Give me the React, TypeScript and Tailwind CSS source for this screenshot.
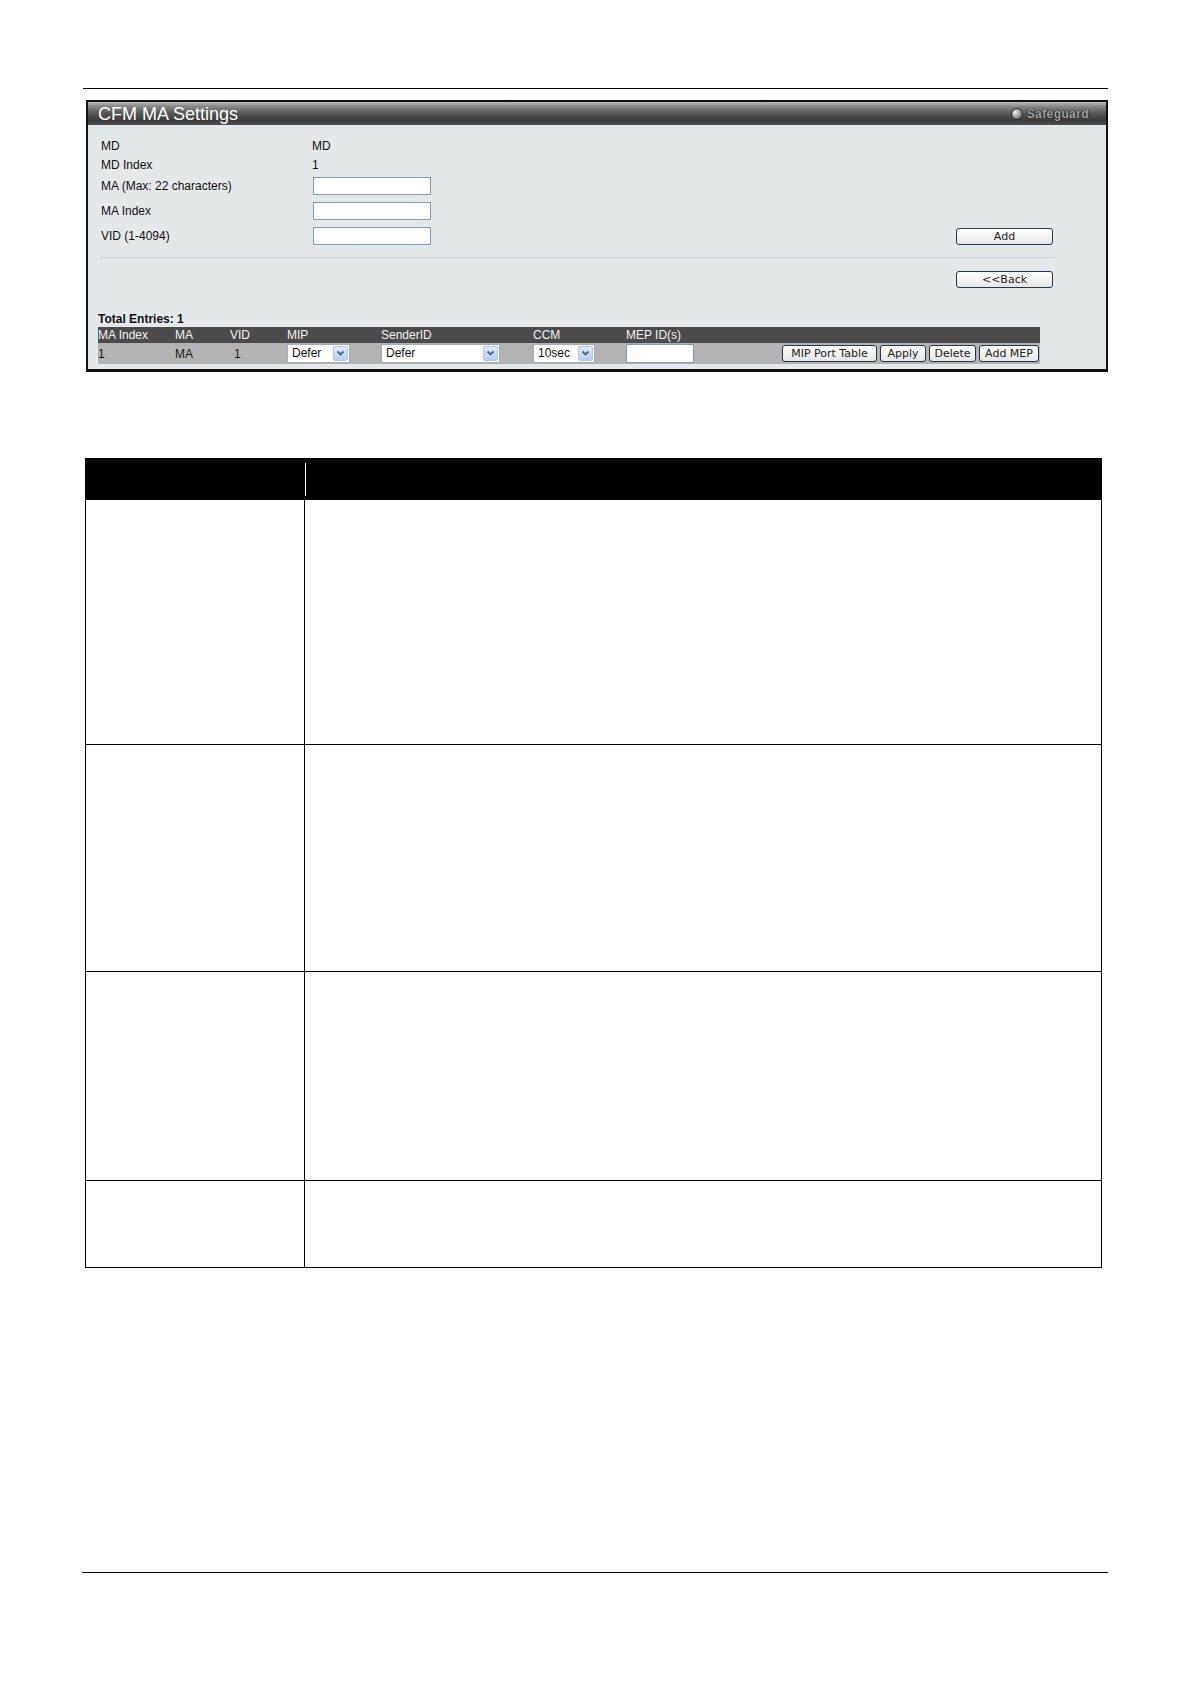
import React from "react";

const arial = "font-['Liberation_Sans',Arial,sans-serif]";
const verdana = "font-['DejaVu_Sans',Verdana,sans-serif]";

function Btn({ w, children }: { w: string; children: React.ReactNode }) {
  return (
    <button
      type="button"
      className={`${w} h-[17px] shrink-0 rounded-[3px] border border-[#27384a] bg-[linear-gradient(to_bottom,#ffffff,#e6e6e6)] ${verdana} text-[11px] leading-none text-[#222]`}
    >
      {children}
    </button>
  );
}

function Select({ w, value }: { w: string; value: string }) {
  return (
    <div className={`${w} flex h-[19px] items-stretch border border-[#a5acb5] bg-white`}>
      <span className={`flex-1 pl-[4px] ${arial} text-[12px] leading-[17px] text-[#111]`}>{value}</span>
      <span className="m-[1px] flex w-[15px] items-center justify-center rounded-[2px] border border-[#b3c6e6] bg-[linear-gradient(to_bottom,#e1eafb,#b9cdf2)]">
        <svg width="9" height="7" viewBox="0 0 9 7">
          <polyline points="1.5,1.5 4.5,4.5 7.5,1.5" fill="none" stroke="#4d6185" strokeWidth="1.8" />
        </svg>
      </span>
    </div>
  );
}

function TextBox({ w }: { w: string }) {
  return <div className={`${w} h-[18px] border border-[#7f9db9] bg-white`} />;
}

export default function App() {
  return (
    <div className="flex min-h-[1684px] w-[1191px] flex-col bg-white pt-[88px]">
      <div className="ml-[83px] h-px w-[1025px] bg-black" />

      {/* settings panel */}
      <div className="ml-[86px] mt-[11px] flex h-[272px] w-[1022px] flex-col border-2 border-b-[3px] border-[#111] bg-[#e5e8e9]">
        <div className="flex h-[23px] items-center justify-between bg-[linear-gradient(to_bottom,#bdbdbd_0%,#8a8a8a_18%,#555_50%,#3c3c3c_80%,#4f4f4f_100%)] pl-[10px] pr-[17px]">
          <span className={`${arial} text-[18px] leading-none text-white`}>CFM MA Settings</span>
          <span className="flex items-center gap-[4px]">
            <span className="h-[12px] w-[12px] rounded-full border border-[#2a2a2a] bg-[radial-gradient(circle_at_35%_35%,#f0f0f0,#999_50%,#4a4a4a)]" />
            <span
              className={`${arial} text-[12px] font-bold leading-none tracking-[0.4px] text-[#a4a4a4] [text-shadow:0_0_1px_#000,0_0_1px_#000]`}
            >
              Safeguard
            </span>
          </span>
        </div>

        <div className={`flex flex-1 flex-col pt-[11px] ${arial} text-[12px] text-[#111]`}>
          <div className="flex h-[19px] items-center pl-[13px]">
            <span className="w-[211px]">MD</span>
            <span>MD</span>
          </div>
          <div className="flex h-[19px] items-center pl-[13px]">
            <span className="w-[211px]">MD Index</span>
            <span>1</span>
          </div>
          <div className="mt-[3px] flex h-[18px] items-center pl-[13px]">
            <span className="w-[212px]">MA (Max: 22 characters)</span>
            <TextBox w="w-[118px]" />
          </div>
          <div className="mt-[7px] flex h-[18px] items-center pl-[13px]">
            <span className="w-[212px]">MA Index</span>
            <TextBox w="w-[118px]" />
          </div>
          <div className="mt-[7px] flex h-[18px] items-center pl-[13px] pr-[53px]">
            <span className="w-[212px]">VID (1-4094)</span>
            <TextBox w="w-[118px]" />
            <div className="ml-auto">
              <Btn w="w-[97px] h-[15px]">Add</Btn>
            </div>
          </div>
          <div className="ml-[12px] mt-[12px] h-px w-[955px] bg-[#c9cdd0]" />
          <div className="mt-[12px] flex pr-[53px]">
            <div className="ml-auto">
              <Btn w="w-[97px]">&lt;&lt;Back</Btn>
            </div>
          </div>

          <div className="ml-[10px] mt-[23px] w-[942px]">
            <div className="h-[16px] text-[12px] font-bold leading-[16px]">Total Entries: 1</div>
            <div className="grid h-[16px] grid-cols-[77px_55px_57px_94px_152px_93px_1fr] items-center bg-[#4b4b4b] text-[12px] leading-none text-[#f2f2f2]">
              <span>MA Index</span>
              <span>MA</span>
              <span>VID</span>
              <span>MIP</span>
              <span>SenderID</span>
              <span>CCM</span>
              <span>MEP ID(s)</span>
            </div>
            <div className="grid h-[21px] grid-cols-[77px_55px_57px_94px_152px_93px_1fr] items-center bg-[#b3b3b3] text-[12px] leading-none text-[#1a1a1a]">
              <span>1</span>
              <span>MA</span>
              <span className="pl-[4px]">1</span>
              <span>
                <Select w="w-[63px]" value="Defer" />
              </span>
              <span>
                <Select w="w-[119px]" value="Defer" />
              </span>
              <span>
                <Select w="w-[62px]" value="10sec" />
              </span>
              <span className="flex items-center pr-[1px]">
                <span className="h-[19px] w-[68px] border border-[#7f9db9] bg-white" />
                <span className="ml-auto flex gap-[3px]">
                  <Btn w="w-[95px]">MIP Port Table</Btn>
                  <Btn w="w-[46px]">Apply</Btn>
                  <Btn w="w-[47px]">Delete</Btn>
                  <Btn w="w-[60px]">Add MEP</Btn>
                </span>
              </span>
            </div>
          </div>
        </div>
      </div>

      {/* description table */}
      <div className="ml-[85px] mt-[86px] flex w-[1017px] flex-col border border-black">
        <div className="flex h-[41px] bg-black">
          <div className="w-[219px]" />
          <div className="my-[4px] w-px bg-white" />
        </div>
        {["h-[244px]", "h-[227px]", "h-[209px]", "h-[87px]"].map((h, i) => (
          <div key={i} className={`grid ${h} grid-cols-[219px_1fr] ${i > 0 ? "border-t border-black" : ""}`}>
            <div className="border-r border-black" />
            <div />
          </div>
        ))}
      </div>

      <div className="ml-[82px] mt-[304px] h-px w-[1026px] bg-black" />
    </div>
  );
}
